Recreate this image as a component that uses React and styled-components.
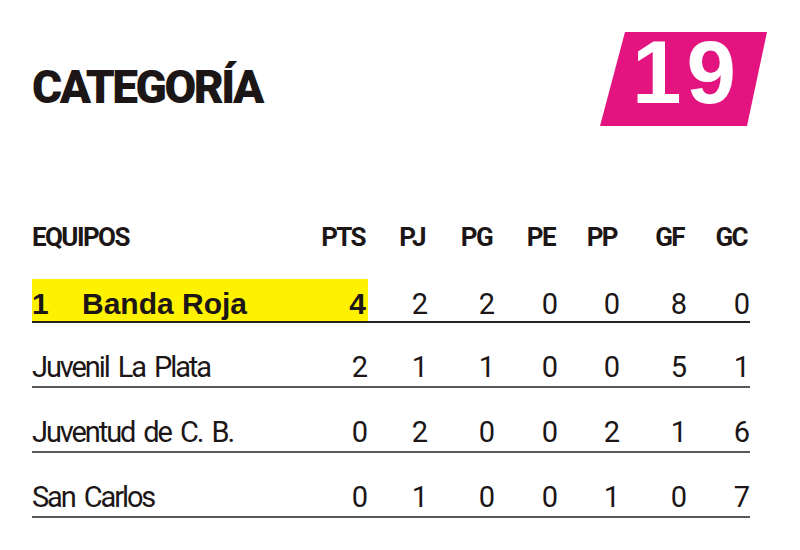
import React from 'react';
import styled, { createGlobalStyle } from 'styled-components';

const GlobalStyle = createGlobalStyle`
    body {
        margin: 0;
        background: #ffffff;
        color: #1c1616;
        font-family: Roboto, "Liberation Sans", sans-serif;
    }
`;

const Page = styled.div`
    width: 800px;
    height: 550px;
    box-sizing: border-box;
    padding: 32px 33px 0 32px;
`;

const Header = styled.div`
    display: flex;
    justify-content: space-between;
    align-items: flex-start;
`;

const Title = styled.h1`
    margin: 32px 0 0 0;
    font-family: Roboto, "Liberation Sans", sans-serif;
    font-weight: 900;
    font-size: 46px;
    line-height: 1;
    letter-spacing: -2.5px;
    color: #1c1616;
`;

const Badge = styled.div`
    width: 167px;
    height: 94px;
    background: #e3137f;
    clip-path: polygon(25px 0, 167px 0, 147px 94px, 0 94px);
    display: flex;
    align-items: center;
    justify-content: center;
    padding: 0 0 14px 6px;
    box-sizing: border-box;
    color: #ffffff;
    font-family: "Liberation Sans", Arial, sans-serif;
    font-weight: 700;
    font-size: 89px;
    line-height: 1;
    letter-spacing: 5px;
`;

const Table = styled.div`
    margin-top: 98px;
    width: 718px;
`;

const columns = '276px 60px 60px 67px 63px 62px 67px 63px';

const HeadRow = styled.div`
    display: grid;
    grid-template-columns: ${columns};
    margin-bottom: 29px;
    font-family: Roboto, "Liberation Sans", sans-serif;
    font-weight: 700;
    font-size: 26px;
    line-height: 26px;
    letter-spacing: -1.6px;
`;

const HeadCell = styled.div`
    text-align: ${p => (p.$left ? 'left' : 'right')};
    padding-right: ${p => (p.$left ? '0' : '3px')};
`;

const Row = styled.div`
    display: grid;
    grid-template-columns: ${columns};
    align-items: end;
    height: ${p => (p.$first ? '42px' : '63px')};
    border-bottom: 2px solid ${p => (p.$first ? '#262222' : '#5c5858')};
`;

const Cell = styled.div`
    height: 100%;
    display: flex;
    align-items: flex-end;
    justify-content: ${p => (p.$left ? 'flex-start' : 'flex-end')};
    padding: 0 2px ${p => (p.$first ? '2px' : '4px')} 0;
    box-sizing: border-box;
    background: ${p => (p.$mark ? '#fff200' : 'transparent')};
    font-family: Roboto, "Liberation Sans", sans-serif;
    font-weight: 400;
    font-size: 29px;
    line-height: 1;
    letter-spacing: -2.1px;
    word-spacing: 4px;
    white-space: pre;
`;

const Strong = styled.span`
    font-family: "Liberation Sans", Arial, sans-serif;
    font-weight: 700;
    font-size: 30px;
    line-height: 1;
    letter-spacing: 0;
    word-spacing: 0;
`;

const Rank = styled(Strong)`
    display: inline-block;
    width: 50px;
`;

const headers = ['PTS', 'PJ', 'PG', 'PE', 'PP', 'GF', 'GC'];

const rows = [
    { team: 'Banda Roja', stats: [4, 2, 2, 0, 0, 8, 0] },
    { team: 'Juvenil La Plata', stats: [2, 1, 1, 0, 0, 5, 1] },
    { team: 'Juventud de C. B.', stats: [0, 2, 0, 0, 2, 1, 6] },
    { team: 'San Carlos', stats: [0, 1, 0, 0, 1, 0, 7] },
];

const App = () => {
    return (
        <Page>
            <GlobalStyle />
            <Header>
                <Title>CATEGORÍA</Title>
                <Badge>19</Badge>
            </Header>
            <Table>
                <HeadRow>
                    <HeadCell $left>EQUIPOS</HeadCell>
                    {headers.map(h => (
                        <HeadCell key={h}>{h}</HeadCell>
                    ))}
                </HeadRow>
                {rows.map((r, i) => {
                    const first = i === 0;
                    return (
                        <Row key={r.team} $first={first}>
                            <Cell $left $first={first} $mark={first}>
                                {first ? (
                                    <>
                                        <Rank>1</Rank>
                                        <Strong>{r.team}</Strong>
                                    </>
                                ) : (
                                    r.team
                                )}
                            </Cell>
                            {r.stats.map((s, j) => (
                                <Cell key={j} $first={first} $mark={first && j === 0}>
                                    {first && j === 0 ? <Strong>{s}</Strong> : s}
                                </Cell>
                            ))}
                        </Row>
                    );
                })}
            </Table>
        </Page>
    );
};

export default App;
